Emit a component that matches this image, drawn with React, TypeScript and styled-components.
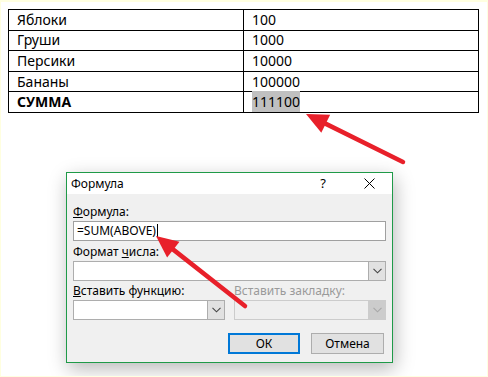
import React from 'react';
import styled, { createGlobalStyle } from 'styled-components';

const GlobalStyle = createGlobalStyle`
  html, body {
    margin: 0;
    padding: 0;
    background: #ffffff;
  }
`;

const Canvas = styled.div`
  position: relative;
  box-sizing: border-box;
  width: 488px;
  height: 377px;
  border: 1px solid #ffffe0;
  border-top-width: 2px;
  padding: 7px 9px 0 7px;
  background: #ffffff;
  overflow: hidden;
`;

const DataTable = styled.table`
  width: 471px;
  border-collapse: collapse;
  font-family: 'Noto Sans', 'Open Sans', sans-serif;
  font-size: 14px;
  color: #000;
`;

const Cell = styled.td<{ $bold?: boolean }>`
  border: 1.4px solid #000;
  height: 19.6px;
  padding: 0 8px;
  line-height: 18px;
  font-weight: ${(p) => (p.$bold ? 700 : 400)};
  width: 50%;
  vertical-align: middle;
`;

const Highlight = styled.span`
  background: #c0c0c0;
  padding: 1px 0 1px 0;
`;

const DialogArea = styled.div`
  padding-left: 58px;
  padding-top: 59px;
`;

const Dialog = styled.div`
  box-sizing: border-box;
  width: 327px;
  height: 191px;
  border: 1px solid #1f9a48;
  background: #f0f0f0;
  box-shadow: 2px 6px 18px rgba(0, 0, 0, 0.28);
  font-family: 'Noto Sans', 'Open Sans', sans-serif;
  font-size: 12px;
  color: #000;
  display: flex;
  flex-direction: column;
`;

const TitleBar = styled.div`
  height: 21px;
  background: #ffffff;
  display: flex;
  align-items: center;
  padding-left: 4px;
`;

const Title = styled.div`
  flex: 1;
  font-size: 12px;
`;

const TitleButton = styled.div`
  width: 46px;
  height: 21px;
  display: flex;
  align-items: center;
  justify-content: center;
  font-size: 13px;
`;

const Body = styled.div`
  flex: 1;
  padding: 8px 6px 10px 6px;
  display: flex;
  flex-direction: column;
`;

const Label = styled.div<{ $disabled?: boolean }>`
  height: 19px;
  line-height: 19px;
  color: ${(p) => (p.$disabled ? '#9a9a9a' : '#000')};
  white-space: nowrap;
`;

const TextBox = styled.div`
  box-sizing: border-box;
  height: 20px;
  background: #fff;
  border: 1px solid #a0a0a0;
  display: flex;
  align-items: center;
  padding-left: 3px;
  margin-bottom: 1px;
`;

const Caret = styled.span`
  display: inline-block;
  width: 1px;
  height: 14px;
  background: #000;
  margin-left: 1px;
`;

const Select = styled.div<{ $disabled?: boolean }>`
  box-sizing: border-box;
  height: 20px;
  background: ${(p) => (p.$disabled ? '#efefef' : '#fff')};
  border: 1px solid ${(p) => (p.$disabled ? '#cccccc' : '#adadad')};
  display: flex;
  justify-content: flex-end;
`;

const DropButton = styled.div<{ $disabled?: boolean }>`
  box-sizing: border-box;
  width: 17px;
  height: 18px;
  background: ${(p) => (p.$disabled ? '#cccccc' : '#e1e1e1')};
  border-left: 1px solid ${(p) => (p.$disabled ? '#cccccc' : '#adadad')};
  display: flex;
  align-items: center;
  justify-content: center;
`;

const Columns = styled.div`
  display: grid;
  grid-template-columns: 152px 152px;
  column-gap: 9px;
`;

const Buttons = styled.div`
  display: flex;
  justify-content: flex-end;
  gap: 11px;
  margin-top: 13px;
  padding-right: 2px;
`;

const Button = styled.div<{ $primary?: boolean }>`
  box-sizing: border-box;
  width: ${(p) => (p.$primary ? '72px' : '73px')};
  height: 21px;
  background: #e1e1e1;
  border: ${(p) => (p.$primary ? '2px solid #0078d7' : '1px solid #adadad')};
  display: flex;
  align-items: center;
  justify-content: center;
  font-size: 12px;
`;

const Overlay = styled.svg`
  position: absolute;
  left: 0;
  top: 0;
  pointer-events: none;
`;

const Chevron = ({ disabled }: { disabled?: boolean }) => (
  <svg width="9" height="6" viewBox="0 0 9 6">
    <path d="M0.5 0.8 L4.5 4.8 L8.5 0.8" fill="none" stroke={disabled ? '#a8a8a8' : '#444'} strokeWidth="1.1" />
  </svg>
);

const rows = [
  ['Яблоки', '100'],
  ['Груши', '1000'],
  ['Персики', '10000'],
  ['Бананы', '100000'],
];

const Arrow = ({ x1, y1, x2, y2 }: { x1: number; y1: number; x2: number; y2: number }) => {
  const dx = x2 - x1;
  const dy = y2 - y1;
  const len = Math.hypot(dx, dy);
  const ux = dx / len;
  const uy = dy / len;
  const headLen = 22;
  const headW = 10;
  const bx = x2 - ux * headLen;
  const by = y2 - uy * headLen;
  const px = -uy * headW;
  const py = ux * headW;
  return (
    <g fill="#e8202a" stroke="#e8202a">
      <line x1={x1} y1={y1} x2={bx + ux * 2} y2={by + uy * 2} strokeWidth="4.5" strokeLinecap="round" />
      <polygon points={`${x2},${y2} ${bx + px},${by + py} ${bx - px},${by - py}`} stroke="none" />
    </g>
  );
};

export default function App() {
  return (
    <>
      <GlobalStyle />
      <Canvas>
        <DataTable>
          <tbody>
            {rows.map(([name, value]) => (
              <tr key={name}>
                <Cell>{name}</Cell>
                <Cell>{value}</Cell>
              </tr>
            ))}
            <tr>
              <Cell $bold>СУММА</Cell>
              <Cell>
                <Highlight>111100</Highlight>
              </Cell>
            </tr>
          </tbody>
        </DataTable>

        <DialogArea>
          <Dialog>
            <TitleBar>
              <Title>Формула</Title>
              <TitleButton>?</TitleButton>
              <TitleButton>
                <svg width="11" height="11" viewBox="0 0 11 11">
                  <path d="M0.5 0.5 L10.5 10.5 M10.5 0.5 L0.5 10.5" stroke="#000" strokeWidth="1" />
                </svg>
              </TitleButton>
            </TitleBar>
            <Body>
              <Label>
                <u>Ф</u>ормула:
              </Label>
              <TextBox>
                =SUM(ABOVE)
                <Caret />
              </TextBox>
              <Label>
                Формат <u>ч</u>исла:
              </Label>
              <Select>
                <DropButton>
                  <Chevron />
                </DropButton>
              </Select>
              <Columns>
                <div>
                  <Label>
                    <u>В</u>ставить функцию:
                  </Label>
                  <Select>
                    <DropButton>
                      <Chevron />
                    </DropButton>
                  </Select>
                </div>
                <div>
                  <Label $disabled>Вставить закладку:</Label>
                  <Select $disabled>
                    <DropButton $disabled>
                      <Chevron disabled />
                    </DropButton>
                  </Select>
                </div>
              </Columns>
              <Buttons>
                <Button $primary>ОК</Button>
                <Button>Отмена</Button>
              </Buttons>
            </Body>
          </Dialog>
        </DialogArea>

        <Overlay width="488" height="377" viewBox="0 0 488 377">
          <Arrow x1={402} y1={160} x2={305} y2={112} />
          <Arrow x1={244} y1={304} x2={155} y2={234} />
        </Overlay>
      </Canvas>
    </>
  );
}
